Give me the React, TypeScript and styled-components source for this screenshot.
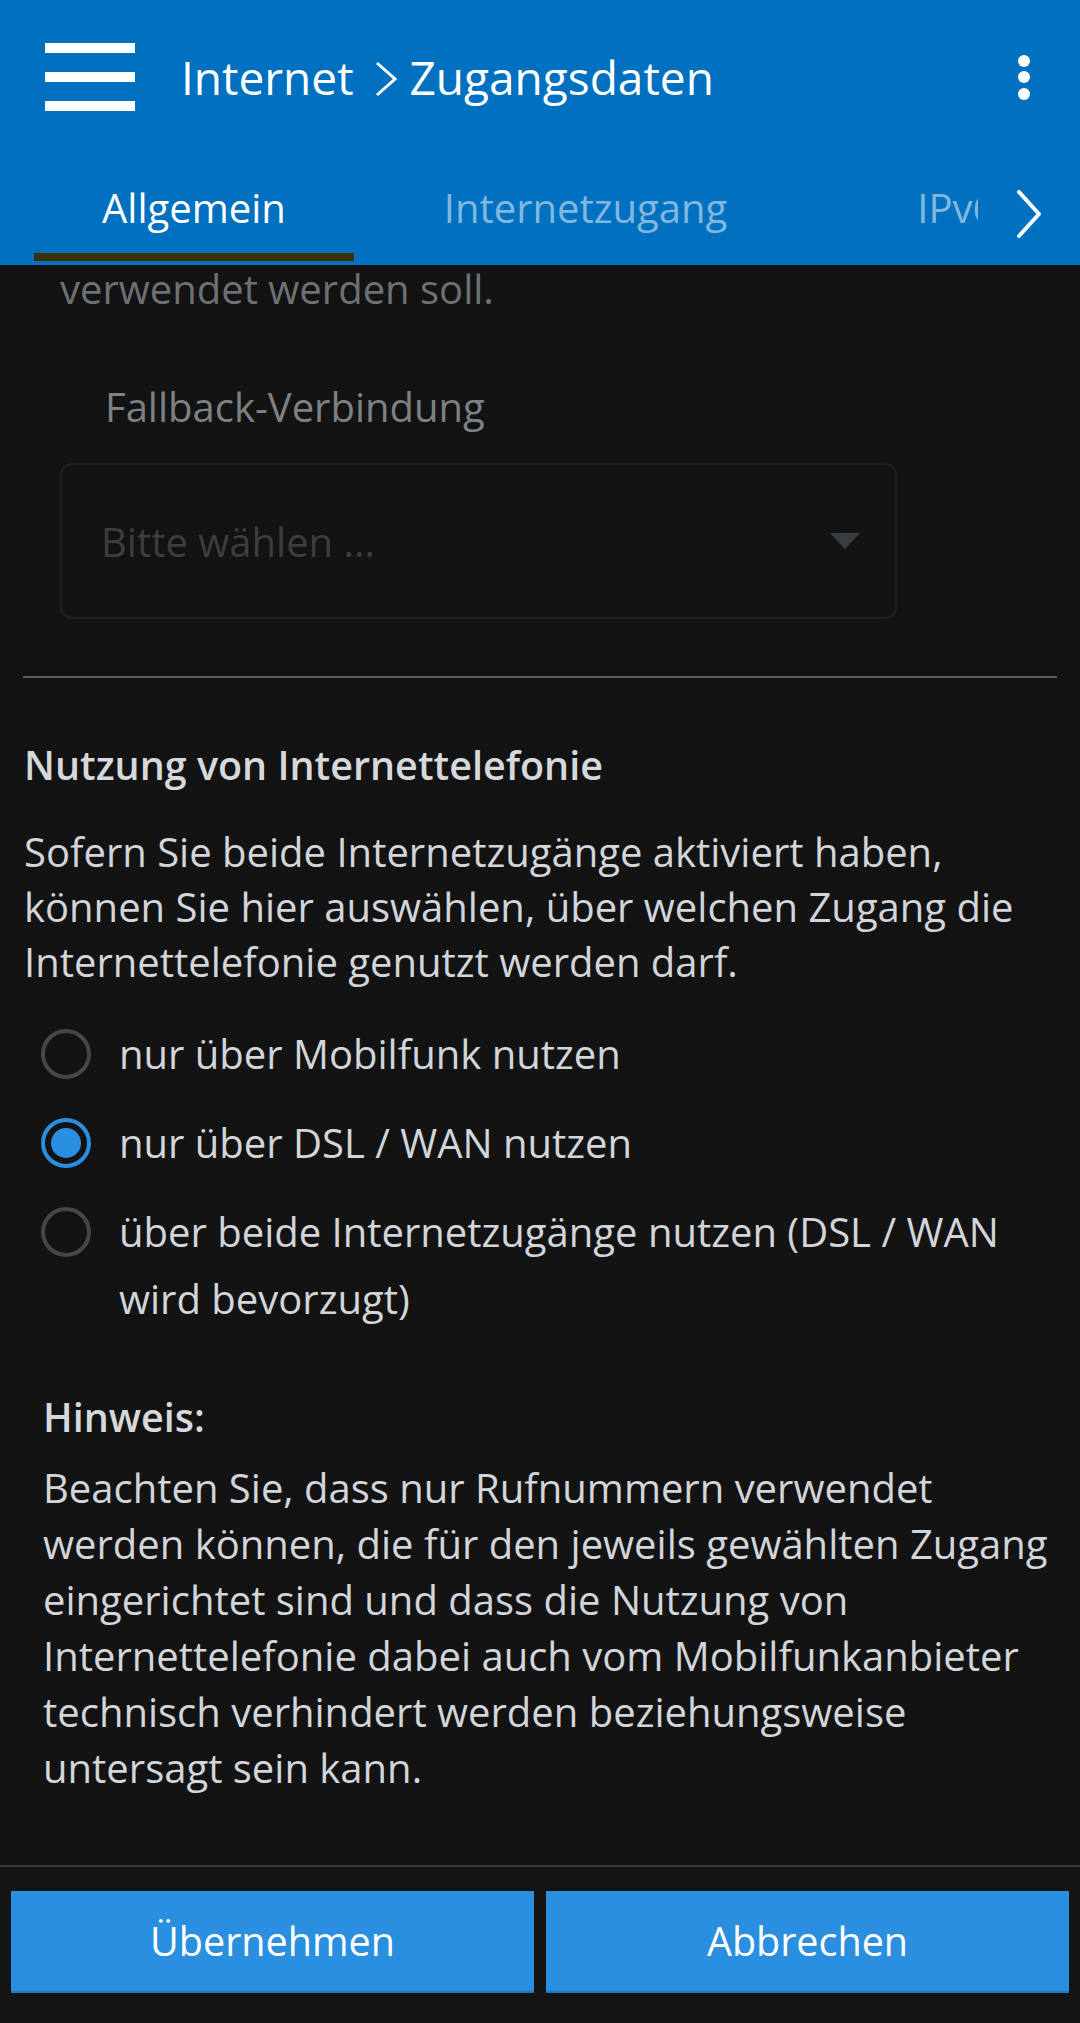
import styled, { createGlobalStyle, css } from "styled-components";

const GlobalStyle = createGlobalStyle`
  html, body {
    margin: 0;
    padding: 0;
    background: #131313;
  }
  body {
    font-family: "Open Sans", "Noto Sans", sans-serif;
    color: #d2d5d9;
  }
  * { box-sizing: border-box; }
`;

const Page = styled.div`
  width: 1080px;
  height: 2023px;
  display: flex;
  flex-direction: column;
  overflow: hidden;
  background: #131313;
`;

// Kopfbereich
const Header = styled.header`
  background: #0070c0;
  height: 265px;
  flex: 0 0 auto;
  position: relative;
  z-index: 1;
`;

const TopBar = styled.div`
  height: 154px;
  display: flex;
  align-items: center;
  padding: 0 50px 0 45px;
`;

const MenuButton = styled.div`
  width: 90px;
  height: 68px;
  display: flex;
  flex-direction: column;
  justify-content: space-between;
`;

const MenuBar = styled.span`
  display: block;
  height: 10px;
  background: #fff;
`;

const Title = styled.h1`
  margin: 0 0 0 46px;
  display: flex;
  align-items: center;
  font-size: 46px;
  font-weight: 400;
  color: #fff;
  white-space: nowrap;
  svg { margin: 4px 12px 0 20px; }
`;

const Kebab = styled.div`
  margin-left: auto;
  display: flex;
  flex-direction: column;
  gap: 4.5px;
`;

const Dot = styled.span`
  width: 12px;
  height: 12px;
  border-radius: 50%;
  background: #fff;
`;

const TabBar = styled.nav`
  height: 111px;
  display: flex;
`;

const TabStrip = styled.div`
  flex: 1;
  display: flex;
  padding-left: 34px;
  overflow: hidden;
`;

const Tab = styled.div<{ $active?: boolean; $pad: number }>`
  flex: 0 0 auto;
  padding: 8px ${(p) => p.$pad}px 0;
  line-height: 91px;
  font-size: 40px;
  white-space: nowrap;
  color: rgba(255, 255, 255, 0.52);
  border-bottom: 8px solid transparent;
  height: 107px;
  ${(p) =>
    p.$active &&
    css`
      color: #fff;
      border-bottom-color: #3b3104;
    `}
`;

const TabNext = styled.div`
  flex: 0 0 102px;
  display: flex;
  justify-content: center;
  padding-top: 36px;
`;

// Inhalt
const Main = styled.main`
  flex: 1;
  overflow: hidden;
  padding: 0 24px;
`;

const DimText = styled.p<{ $indent: number; $top: number; $color: string }>`
  margin: ${(p) => p.$top}px 0 0 ${(p) => p.$indent}px;
  font-size: 40px;
  line-height: 55px;
  color: ${(p) => p.$color};
  white-space: nowrap;
`;

const Select = styled.div`
  margin: 29px 0 0 36px;
  width: 837px;
  height: 156px;
  border: 2px solid #1f2021;
  border-radius: 12px;
  padding: 0 35px 0 39px;
  display: flex;
  align-items: center;
  justify-content: space-between;
  font-size: 40px;
  color: #3b3d3f;
`;

const Caret = styled.span`
  width: 0;
  height: 0;
  border-left: 15.5px solid transparent;
  border-right: 15.5px solid transparent;
  border-top: 16px solid #3a3d40;
`;

const Divider = styled.hr`
  margin: 57px -1px 0;
  border: 0;
  height: 2px;
  background: #5b5b5b;
`;

const Heading = styled.h2<{ $top: number }>`
  margin: ${(p) => p.$top}px 0 0;
  font-size: 39.5px;
  line-height: 52px;
  font-weight: 600;
  color: #d6d9dc;
  white-space: nowrap;
`;

const Text = styled.p<{ $top: number; $lh: number }>`
  margin: ${(p) => p.$top}px 0 0;
  font-size: 40px;
  line-height: ${(p) => p.$lh}px;
  white-space: nowrap;
  color: #d2d5d9;
`;

const RadioList = styled.div`
  margin-top: 31px;
  display: flex;
  flex-direction: column;
  gap: 22px;
`;

const RadioRow = styled.label`
  display: flex;
  gap: 28px;
  padding-left: 17px;
  font-size: 40px;
  line-height: 67px;
  color: #d2d5d9;
  white-space: nowrap;
`;

const RadioBox = styled.span`
  flex: 0 0 50px;
  height: 67px;
  display: flex;
  align-items: center;
`;

const RadioCircle = styled.span<{ $checked?: boolean }>`
  width: 50px;
  height: 50px;
  border-radius: 50%;
  border: 4px solid ${(p) => (p.$checked ? "#2a8fe0" : "#43474b")};
  display: flex;
  align-items: center;
  justify-content: center;
  &::after {
    content: "";
    width: 30px;
    height: 30px;
    border-radius: 50%;
    background: ${(p) => (p.$checked ? "#2a8fe0" : "transparent")};
  }
`;

const Note = styled.section`
  margin: 59px 0 0 19px;
`;

// Fußleiste
const Footer = styled.footer`
  flex: 0 0 auto;
  border-top: 2px solid #3b3b3b;
  padding: 24px 11px 30px;
  display: grid;
  grid-template-columns: 1fr 1fr;
  gap: 12px;
  background: #141414;
`;

const ActionButton = styled.button`
  height: 102px;
  border: 0;
  border-bottom: 2px solid #2378c0;
  background: #2a8fdf;
  color: #fff;
  font-family: inherit;
  font-size: 39.5px;
  padding: 0;
`;

const options = [
  { label: ["nur über Mobilfunk nutzen"], checked: false },
  { label: ["nur über DSL / WAN nutzen"], checked: true },
  { label: ["über beide Internetzugänge nutzen (DSL / WAN", "wird bevorzugt)"], checked: false },
];

export default function App() {
  return (
    <>
      <GlobalStyle />
      <Page>
        <Header>
          <TopBar>
            <MenuButton>
              <MenuBar />
              <MenuBar />
              <MenuBar />
            </MenuButton>
            <Title>
              Internet
              <svg width="24" height="36" viewBox="0 0 24 36">
                <polyline points="3,2 21,18 3,34" fill="none" stroke="#fff" strokeWidth="3" />
              </svg>
              Zugangsdaten
            </Title>
            <Kebab>
              <Dot />
              <Dot />
              <Dot />
            </Kebab>
          </TopBar>
          <TabBar>
            <TabStrip>
              <Tab $active $pad={68}>Allgemein</Tab>
              <Tab $pad={90}>Internetzugang</Tab>
              <Tab $pad={100}>IPv6</Tab>
            </TabStrip>
            <TabNext>
              <svg width="26" height="48" viewBox="0 0 26 48">
                <polyline points="3,2 23,24 3,46" fill="none" stroke="#fff" strokeWidth="4" strokeLinecap="round" strokeLinejoin="round" />
              </svg>
            </TabNext>
          </TabBar>
        </Header>

        <Main>
          <DimText $indent={36} $top={-4} $color="#6e7174">verwendet werden soll.</DimText>
          <DimText $indent={81} $top={63} $color="#7e8184">Fallback-Verbindung</DimText>
          <Select>
            <span>Bitte wählen ...</span>
            <Caret />
          </Select>

          <Divider />

          <Heading $top={61}>Nutzung von Internettelefonie</Heading>
          <Text $top={33} $lh={55}>
            Sofern Sie beide Internetzugänge aktiviert haben,
            <br />
            können Sie hier auswählen, über welchen Zugang die
            <br />
            Internettelefonie genutzt werden darf.
          </Text>

          <RadioList>
            {options.map((o) => (
              <RadioRow key={o.label[0]}>
                <RadioBox>
                  <RadioCircle $checked={o.checked} />
                </RadioBox>
                <span>
                  {o.label.map((l, i) => (
                    <span key={l}>
                      {i > 0 && <br />}
                      {l}
                    </span>
                  ))}
                </span>
              </RadioRow>
            ))}
          </RadioList>

          <Note>
            <Heading $top={0}>Hinweis:</Heading>
            <Text $top={17} $lh={56}>
              Beachten Sie, dass nur Rufnummern verwendet
              <br />
              werden können, die für den jeweils gewählten Zugang
              <br />
              eingerichtet sind und dass die Nutzung von
              <br />
              Internettelefonie dabei auch vom Mobilfunkanbieter
              <br />
              technisch verhindert werden beziehungsweise
              <br />
              untersagt sein kann.
            </Text>
          </Note>
        </Main>

        <Footer>
          <ActionButton>Übernehmen</ActionButton>
          <ActionButton>Abbrechen</ActionButton>
        </Footer>
      </Page>
    </>
  );
}
